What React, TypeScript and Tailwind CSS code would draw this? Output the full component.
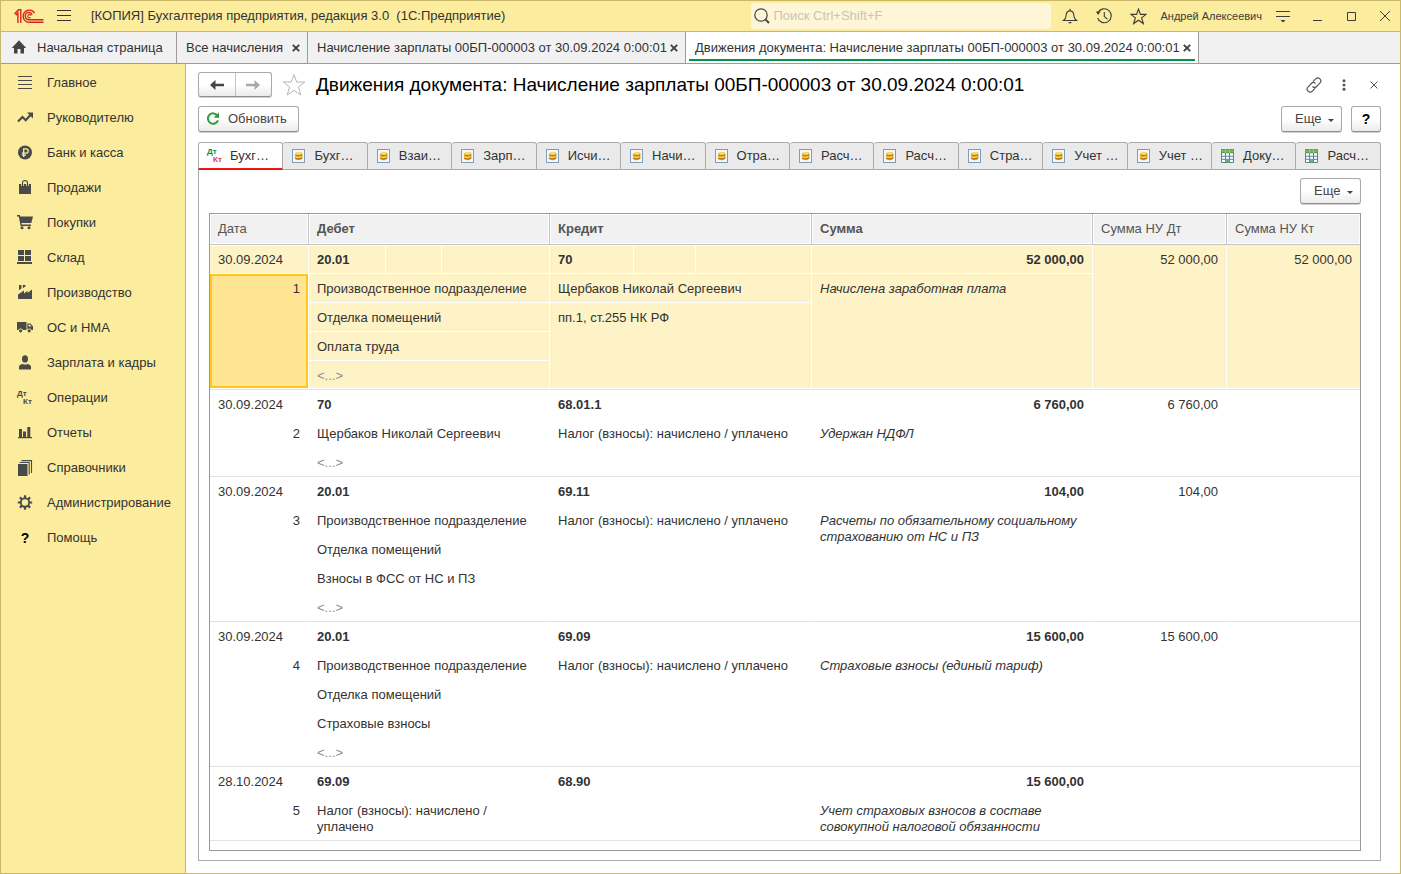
import React from "react";

type IconProps = { className?: string };

const Glyph = ({ children, className = "" }: { children: React.ReactNode; className?: string }) => (
  <svg viewBox="0 0 16 16" className={`size-4 shrink-0 ${className}`} fill="currentColor" aria-hidden="true">
    {children}
  </svg>
);

const Logo = () => (
  <svg viewBox="0 0 30 16" className="h-4 w-[30px] shrink-0" fill="none" stroke="#d8231c" strokeWidth="1.4" aria-hidden="true">
    <path d="M.5 6 4.6 1.8H6.8V15" />
    <path d="M1.8 7.2 3.9 5V15" />
    <path d="M20.6 5.2A6.1 6.1 0 1 0 15.4 14.3H29.5" />
    <path d="M18.2 6.8A3.6 3.6 0 1 0 15.4 11.7H29.5" />
    <path d="M16.9 7.8a1.6 1.6 0 1 0-.4 1.6" strokeWidth="1.1" />
  </svg>
);

const ListIcon = () => (
  <Glyph>
    <path d="M1 1h14v1H1zM1 5h14v1H1zM1 9h14v1H1zM1 13h14v1H1z" />
  </Glyph>
);
const TrendIcon = () => (
  <Glyph>
    <path d="M1 11.5 5.5 7l3.2 3.2L13.5 5" fill="none" stroke="currentColor" strokeWidth="2.2" />
    <path d="M10 2.5h6v6z" />
  </Glyph>
);
const RubleIcon = () => (
  <Glyph>
    <circle cx="8" cy="7.5" r="7" />
    <path d="M6.7 12V3.9h2.4a2.1 2.1 0 0 1 0 4.3H4.8M4.8 10.1H9" fill="none" stroke="#fbec9e" strokeWidth="1.3" />
  </Glyph>
);
const BagIcon = () => (
  <Glyph>
    <path d="M2 4h12v10H2z" />
    <path d="M5.5 6V2.2Q5.5 0.4 8 .4t2.5 1.8V6" fill="none" stroke="#fbec9e" strokeWidth="2.6" />
    <path d="M5.5 6V2.6Q5.5.6 8 .6t2.5 2V6" fill="none" stroke="currentColor" strokeWidth="1.1" />
  </Glyph>
);
const CartIcon = () => (
  <Glyph>
    <path d="M0 0h2.9l.5 1.5H16L14.3 8H4.4l.4 1.5H14V11H3.6L1.8 1.5H0z" />
    <circle cx="5" cy="12.7" r="1.5" />
    <circle cx="12" cy="12.7" r="1.5" />
  </Glyph>
);
const WarehouseIcon = () => (
  <Glyph>
    <path d="M1 0h6v5H1zM8 0h6v5H8zM1 6h6v5H1zM8 6h6v5H8zM0 12h15v2H0z" />
  </Glyph>
);
const FactoryIcon = () => (
  <Glyph>
    <path d="M1 14V9.5l6-4v2.9l3.6-2.6V8L15 4.6V14zM2 0h2.4v3.6L2 5.2zM5.8 0h2.6v1.4L5.8 3.2z" />
  </Glyph>
);
const TruckIcon = () => (
  <Glyph>
    <path d="M0 2h9.5v8H0zM10.3 3.5h3L16 6.3V10h-5.7z" />
    <path d="M11.5 4.6h1.4l1.6 1.9h-3z" fill="#fbec9e" />
    <circle cx="3.6" cy="10.8" r="2.4" fill="#fbec9e" />
    <circle cx="12.2" cy="10.8" r="2.4" fill="#fbec9e" />
    <circle cx="3.6" cy="10.8" r="1.6" />
    <circle cx="12.2" cy="10.8" r="1.6" />
  </Glyph>
);
const PersonIcon = () => (
  <Glyph>
    <ellipse cx="8" cy="3.9" rx="3" ry="3.6" />
    <path d="M2 14.5V12Q2 9.5 5.6 8.9L8 9.7l2.4-.8Q14 9.5 14 12v2.5z" />
  </Glyph>
);
const ReportIcon = () => (
  <Glyph>
    <path d="M1 12h14v1.3H1zM2 4h3v8H2zM6 6.5h3V12H6zM10.3 2h3v10h-3z" />
  </Glyph>
);
const BooksIcon = () => (
  <Glyph>
    <path d="M1 4h9.5v12H1z" />
    <path d="M2.5 2.5h9.7V14.5M4.5.6h10V13" fill="none" stroke="currentColor" strokeWidth="1.1" />
  </Glyph>
);
const GearIcon = () => (
  <Glyph>
    <g fill="none" stroke="currentColor">
      <circle cx="8" cy="7.5" r="4.2" strokeWidth="1.9" />
      <path
        strokeWidth="2.2"
        d="M8 .3v2.6M8 12.1v2.6M.8 7.5h2.6M12.6 7.5h2.6M2.9 2.4l1.9 1.9M11.2 10.7l1.9 1.9M2.9 12.6l1.9-1.9M11.2 4.3l1.9-1.9"
      />
    </g>
  </Glyph>
);
const HelpIcon = () => <span className="w-4 text-center text-sm leading-4 font-bold text-black">?</span>;

const DebitCredit = ({ colored = false }: { colored?: boolean }) => (
  <span
    className="flex h-4 w-4 shrink-0 flex-col justify-center text-left text-[8px] leading-[8px] font-bold"
    aria-hidden="true"
  >
    <span className={colored ? "text-[#00934a]" : ""}>Дт</span>
    <span className={colored ? "pl-1.5 text-[#d9413c]" : "pl-1.5"}>Кт</span>
  </span>
);

const RegisterIcon = () => (
  <Glyph>
    <rect x="1.5" y="1.5" width="12" height="13" fill="#f4f8fc" stroke="#7f9db9" />
    <path d="M3.6 6.2 5.5 4.6q3.2-1 5.8.2l.2 5.6q-1.6 2-4.2 1.9-2.6-.2-3.8-1.8l1-1.3-1-1.4 1.2-.7z" fill="#e5a519" />
    <ellipse cx="7.8" cy="5.4" rx="2.8" ry="1.2" fill="#fbe36f" />
    <path d="M5 7.6q2.8 1.2 6.2-.4M4.4 10.4q3 1.6 6.8-.6" stroke="#9a6410" strokeWidth=".8" fill="none" />
    <path d="M5 9q2.6.9 5.4-.4" stroke="#fff0a0" strokeWidth=".9" fill="none" />
  </Glyph>
);
const SheetIcon = () => (
  <Glyph>
    <rect x="1.5" y="2" width="12" height="12.5" fill="#fff" />
    <path d="M1.5 5v9.5h12V5M1.5 8.3h12M1.5 11.3h12M5.5 5v9.5M9.5 5v9.5" stroke="#5d7f96" fill="none" />
    <path d="M1 1h4v4.3H1zM5.4 1h4v4.3h-4zM9.8 1H14v4.3H9.8z" fill="#55a544" />
    <path d="M5.6 11.2h3.7v3.2H5.6z" fill="#6bb558" />
    <path d="M1.4 3h12" stroke="#8acb78" />
  </Glyph>
);

const StarIcon = ({ className = "" }: IconProps) => (
  <svg viewBox="0 0 24 24" className={`shrink-0 ${className}`} fill="none" stroke="currentColor" aria-hidden="true">
    <path d="M12 1.6 14.7 9h8l-6.3 5 2.4 8L12 17.3 5.2 22l2.4-8L1.3 9h8z" />
  </svg>
);

const CloseMark = ({ label }: { label: string }) => (
  <button type="button" aria-label={label} className="flex shrink-0 items-center">
    <svg viewBox="0 0 8 8" className="size-2" stroke="#3c3c3c" strokeWidth="1.8" aria-hidden="true">
      <path d="m.8.8 6.4 6.4M7.2.8.8 7.2" />
    </svg>
  </button>
);

const sections: [string, React.ReactNode][] = [
  ["Главное", <ListIcon />],
  ["Руководителю", <TrendIcon />],
  ["Банк и касса", <RubleIcon />],
  ["Продажи", <BagIcon />],
  ["Покупки", <CartIcon />],
  ["Склад", <WarehouseIcon />],
  ["Производство", <FactoryIcon />],
  ["ОС и НМА", <TruckIcon />],
  ["Зарплата и кадры", <PersonIcon />],
  ["Операции", <DebitCredit />],
  ["Отчеты", <ReportIcon />],
  ["Справочники", <BooksIcon />],
  ["Администрирование", <GearIcon />],
  ["Помощь", <HelpIcon />],
];

const openWindows = [
  { title: "Все начисления", width: "w-[131px]" },
  { title: "Начисление зарплаты 00БП-000003 от 30.09.2024 0:00:01", width: "w-[378px]" },
];
const documentTitle = "Движения документа: Начисление зарплаты 00БП-000003 от 30.09.2024 0:00:01";

const registers = [
  "Бухг…", "Бухг…", "Взаи…", "Зарп…", "Исчи…", "Начи…", "Отра…",
  "Расч…", "Расч…", "Стра…", "Учет …", "Учет …", "Доку…", "Расч…",
];

type Entry = {
  date: string;
  debit: string;
  credit: string;
  sum: string;
  taxDebit: string;
  taxCredit: string;
  debitDetails: string[];
  creditDetails: string[];
  note: string;
  selected?: boolean;
};

const entries: Entry[] = [
  {
    date: "30.09.2024", debit: "20.01", credit: "70", sum: "52 000,00", taxDebit: "52 000,00", taxCredit: "52 000,00",
    debitDetails: ["Производственное подразделение", "Отделка помещений", "Оплата труда", "<...>"],
    creditDetails: ["Щербаков Николай Сергеевич", "пп.1, ст.255 НК РФ"],
    note: "Начислена заработная плата",
    selected: true,
  },
  {
    date: "30.09.2024", debit: "70", credit: "68.01.1", sum: "6 760,00", taxDebit: "6 760,00", taxCredit: "",
    debitDetails: ["Щербаков Николай Сергеевич", "<...>"],
    creditDetails: ["Налог (взносы): начислено / уплачено"],
    note: "Удержан НДФЛ",
  },
  {
    date: "30.09.2024", debit: "20.01", credit: "69.11", sum: "104,00", taxDebit: "104,00", taxCredit: "",
    debitDetails: ["Производственное подразделение", "Отделка помещений", "Взносы в ФСС от НС и ПЗ", "<...>"],
    creditDetails: ["Налог (взносы): начислено / уплачено"],
    note: "Расчеты по обязательному социальному страхованию от НС и ПЗ",
  },
  {
    date: "30.09.2024", debit: "20.01", credit: "69.09", sum: "15 600,00", taxDebit: "15 600,00", taxCredit: "",
    debitDetails: ["Производственное подразделение", "Отделка помещений", "Страховые взносы", "<...>"],
    creditDetails: ["Налог (взносы): начислено / уплачено"],
    note: "Страховые взносы (единый тариф)",
  },
  {
    date: "28.10.2024", debit: "69.09", credit: "68.90", sum: "15 600,00", taxDebit: "", taxCredit: "",
    debitDetails: ["Налог (взносы): начислено / уплачено"],
    creditDetails: [""],
    note: "Учет страховых взносов в составе совокупной налоговой обязанности",
  },
];

const cellBase = "border-r border-b border-r-white px-2 pt-[7px] pb-[5px] align-top leading-4";

function EntryRows({ entry, index }: { entry: Entry; index: number }) {
  const count = entry.debitDetails.length;
  const fill = entry.selected ? "bg-[#fef2c7]" : "";
  const inner = `${cellBase} border-b-white ${fill}`;
  const last = `${cellBase} border-b-[#e2e2e2] shadow-[inset_0_-1px_#fff] ${fill}`;
  const top = `${inner} shadow-[inset_0_1px_#fff]`;
  const numberCell = entry.selected
    ? `${cellBase} border-b-[#e2e2e2] bg-[#ffe591] text-right shadow-[inset_0_-1px_#fff,inset_0_-3px_#ffc61c,inset_0_0_0_2px_#ffc61c]`
    : `${last} text-right`;
  return (
    <tbody>
      <tr>
        <td className={top}>{entry.date}</td>
        <td className={`${top} font-bold`}>{entry.debit}</td>
        <td className={top} />
        <td className={top} />
        <td className={`${top} font-bold`}>{entry.credit}</td>
        <td className={top} />
        <td className={top} />
        <td className={`${top} text-right font-bold`}>{entry.sum}</td>
        <td rowSpan={count + 1} className={`${last} text-right`}>{entry.taxDebit}</td>
        <td rowSpan={count + 1} className={`${last} border-r-0 text-right`}>{entry.taxCredit}</td>
      </tr>
      {entry.debitDetails.map((detail, i) => {
        const creditCount = entry.creditDetails.length;
        const creditIsLast = i === creditCount - 1;
        return (
          <tr key={i}>
            {i === 0 && <td rowSpan={count} className={numberCell}>{index + 1}</td>}
            <td colSpan={3} className={`${i === count - 1 ? last : inner} ${detail === "<...>" ? "text-[#8c8c8c]" : ""}`}>
              {detail}
            </td>
            {i < creditCount && (
              <td colSpan={3} rowSpan={creditIsLast ? count - i : 1} className={creditIsLast ? last : inner}>
                {entry.creditDetails[i]}
              </td>
            )}
            {i === 0 && (
              <td rowSpan={count} className={`${last} italic`}>
                <div className="max-w-[264px]">{entry.note}</div>
              </td>
            )}
          </tr>
        );
      })}
    </tbody>
  );
}

const buttonLook =
  "flex items-center rounded-[3px] border border-[#a9a9a9] border-b-[#8f8f8f] bg-linear-to-b from-white from-50% to-[#ebebeb] shadow-[0_1px_0_#d0d0d0]";

const MoreButton = () => (
  <button type="button" className={`${buttonLook} h-[26px] w-[61px] gap-[7px] pl-[13px] text-[#444]`}>
    Еще
    <svg viewBox="0 0 6 4" className="mt-1 h-1 w-1.5" fill="#444" aria-hidden="true">
      <path d="M0 0h6L3 3z" />
    </svg>
  </button>
);

function TitleBar() {
  return (
    <header className="flex h-[31px] items-center border-b border-[#c9b86a] bg-[#fbec9e] pl-[13px]">
      <Logo />
      <button type="button" aria-label="Меню" className="ml-[13px]">
        <svg viewBox="0 0 14 12" className="h-3 w-3.5" stroke="#333" aria-hidden="true">
          <path d="M0 .5h14M0 5.5h14M0 10.5h14" />
        </svg>
      </button>
      <span className="ml-5 whitespace-pre">[КОПИЯ] Бухгалтерия предприятия, редакция 3.0  (1С:Предприятие)</span>
      <label className="ml-auto flex h-[26px] w-[300px] items-center gap-[3px] rounded-[3px] bg-[#fef6d6] pl-[3px]">
        <svg viewBox="0 0 16 16" className="size-4 shrink-0" fill="none" stroke="#444" aria-hidden="true">
          <circle cx="7" cy="7" r="6.2" strokeWidth="1.2" />
          <path d="m11.4 11.4 3.6 3.6" strokeWidth="2" />
        </svg>
        <input
          type="search"
          aria-label="Поиск"
          placeholder="Поиск Ctrl+Shift+F"
          className="min-w-0 flex-1 bg-transparent outline-none placeholder:text-[#c9c5b4]"
        />
      </label>
      <div className="flex items-center pl-[11px] text-[#3c3c3c]">
        <button type="button" aria-label="Уведомления">
          <svg viewBox="0 0 16 16" className="size-4" fill="none" stroke="currentColor" strokeWidth="1.1" aria-hidden="true">
            <path d="M1.5 12.5h13Q12.2 10.7 12 8.2 11.8 3.2 8 2.6 4.2 3.2 4 8.2 3.8 10.7 1.5 12.5zM8 .8v1.8" />
            <path d="M6 14h4l-2 1.8z" fill="currentColor" stroke="none" />
          </svg>
        </button>
        <button type="button" aria-label="История" className="ml-[18px]">
          <svg viewBox="0 0 16 16" className="size-4" fill="none" stroke="currentColor" strokeWidth="1.1" aria-hidden="true">
            <path d="M2 4.6a7 7 0 1 1-.4 5.4" />
            <path d="M8.3 4v4.6l3.2 2.6" />
            <path d="M0 3.6h4.6L2 7z" fill="currentColor" stroke="none" />
          </svg>
        </button>
        <button type="button" aria-label="Избранное" className="ml-[18px]">
          <StarIcon className="size-[17px] stroke-[1.6]" />
        </button>
        <span className="ml-[13px] text-[11px]">Андрей Алексеевич</span>
        <button type="button" aria-label="Настройки" className="ml-3.5">
          <svg viewBox="0 0 14 13" className="h-[13px] w-3.5" stroke="currentColor" aria-hidden="true">
            <path d="M0 1.5h14M0 6.5h14" />
            <path d="M4.5 10h5L7 12.6z" fill="currentColor" stroke="none" />
          </svg>
        </button>
        <button type="button" aria-label="Свернуть" className="ml-[23px]">
          <svg viewBox="0 0 9 10" className="h-2.5 w-[9px]" stroke="currentColor" aria-hidden="true">
            <path d="M0 9.5h9" />
          </svg>
        </button>
        <button type="button" aria-label="Развернуть" className="ml-[25px]">
          <svg viewBox="0 0 9 9" className="size-[9px]" fill="none" stroke="currentColor" aria-hidden="true">
            <path d="M.5.5h8v8h-8z" />
          </svg>
        </button>
        <button type="button" aria-label="Закрыть" className="mr-2.5 ml-6">
          <svg viewBox="0 0 10 10" className="size-2.5" stroke="currentColor" aria-hidden="true">
            <path d="m0 0 10 10M10 0 0 10" />
          </svg>
        </button>
      </div>
    </header>
  );
}

function WindowTabs() {
  return (
    <nav className="flex h-8 items-stretch border-b border-[#9b9b9b] bg-[#f1f1f1] whitespace-nowrap" aria-label="Открытые окна">
      <a href="#home" className="flex w-44 items-center gap-2.5 border-r border-[#9b9b9b] pl-2.5">
        <Glyph className="text-[#444]">
          <path d="M8 .2 15.2 8H13v5.4H9.5V8.9h-3v4.5H3V8H.8z" />
        </Glyph>
        Начальная страница
      </a>
      {openWindows.map(({ title, width }) => (
        <div key={title} className={`flex items-center justify-between border-r border-[#9b9b9b] pr-[7px] pl-[9px] ${width}`}>
          <a href="#window">{title}</a>
          <CloseMark label={`Закрыть: ${title}`} />
        </div>
      ))}
      <div className="flex w-[513px] items-stretch border-r border-[#9b9b9b] bg-white px-[3px] pb-0.5">
        <div className="flex flex-1 items-center justify-between border-b-2 border-[#00934a] pt-1 pr-1 pl-1.5">
          <a href="#document" aria-current="page">{documentTitle}</a>
          <CloseMark label="Закрыть документ" />
        </div>
      </div>
    </nav>
  );
}

function Sidebar() {
  return (
    <nav className="w-[185px] shrink-0 border-r border-[#c9b86a] bg-[#fbec9e] pt-px" aria-label="Разделы">
      {sections.map(([name, icon]) => (
        <a key={name} href="#section" className="flex h-[35px] items-center gap-3.5 pl-4">
          <span className="flex text-[#4a4a4a]">{icon}</span>
          {name}
        </a>
      ))}
    </nav>
  );
}

function Arrow({ className }: IconProps) {
  return (
    <svg viewBox="0 0 14 10" className={`h-2.5 w-3.5 ${className}`} fill="currentColor" aria-hidden="true">
      <path d="M0 5 5.5 0v3.8H14v2.4H5.5V10z" />
    </svg>
  );
}

export default function App() {
  return (
    <div className="flex min-h-screen flex-col border border-[#c9b86a] bg-white font-['Liberation_Sans',Arial,sans-serif] text-[13px] leading-4 text-[#333]">
      <TitleBar />
      <WindowTabs />
      <div className="flex flex-1 items-stretch">
        <Sidebar />
        <main className="flex min-w-0 flex-1 flex-col pt-2 pr-[19px] pb-3 pl-3">
          <div className="flex items-center">
            <div className={`${buttonLook} h-[25px] w-[74px]`}>
              <button type="button" aria-label="Назад" className="flex h-full flex-1 items-center justify-center border-r border-[#c4c4c4] text-[#444]">
                <Arrow className="" />
              </button>
              <button type="button" aria-label="Вперед" className="flex h-full flex-1 items-center justify-center text-[#a9a9a9]">
                <Arrow className="rotate-180" />
              </button>
            </div>
            <button type="button" aria-label="В избранное" className="ml-2.5 text-[#b0b6bc]">
              <StarIcon className="size-6" />
            </button>
            <h1 className="ml-2.5 text-[19px] leading-6 text-black">{documentTitle}</h1>
            <div className="ml-auto flex items-center text-[#555]">
              <button type="button" aria-label="Ссылка">
                <svg viewBox="0 0 16 16" className="size-4" fill="none" stroke="currentColor" strokeWidth="1.2" aria-hidden="true">
                  <path d="m7 4.6 2.6-2.7a2.9 2.9 0 0 1 4.3 4.3l-3.3 3.3a2.9 2.9 0 0 1-4.1 0" />
                  <path d="m9 11.4-2.6 2.7a2.9 2.9 0 0 1-4.3-4.3l3.3-3.3a2.9 2.9 0 0 1 4.1 0" />
                </svg>
              </button>
              <button type="button" aria-label="Действия" className="ml-5">
                <svg viewBox="0 0 4 12" className="h-3 w-1" fill="currentColor" aria-hidden="true">
                  <circle cx="2" cy="1.8" r="1.5" />
                  <circle cx="2" cy="6" r="1.5" />
                  <circle cx="2" cy="10.2" r="1.5" />
                </svg>
              </button>
              <button type="button" aria-label="Закрыть форму" className="mr-[3px] ml-6">
                <svg viewBox="0 0 8 8" className="size-2" stroke="currentColor" aria-hidden="true">
                  <path d="m.5.5 7 7M7.5.5l-7 7" />
                </svg>
              </button>
            </div>
          </div>

          <div className="mt-[9px] flex items-center">
            <button type="button" className={`${buttonLook} h-[26px] gap-[7px] pr-[11px] pl-1.5 text-[#444]`}>
              <Glyph className="text-[#2f9e38]">
                <path d="M12.4 4.6A5.2 5.2 0 1 0 13 9.4" fill="none" stroke="currentColor" strokeWidth="2" />
                <path d="M8.6 6.6 14 7V1.6z" />
              </Glyph>
              Обновить
            </button>
            <div className="ml-auto flex gap-[9px]">
              <MoreButton />
              <button type="button" aria-label="Справка" className={`${buttonLook} h-[26px] w-[30px] justify-center text-sm font-bold text-black`}>
                ?
              </button>
            </div>
          </div>

          <div className="mt-2.5 flex h-7" role="tablist">
            {registers.map((name, i) => (
              <button
                key={i}
                type="button"
                role="tab"
                aria-selected={i === 0}
                className={
                  i === 0
                    ? "flex min-w-0 flex-1 items-center gap-[7px] rounded-t-[3px] border border-b-2 border-[#ababab] border-b-[#f01414] bg-white pl-2 whitespace-nowrap"
                    : "flex min-w-0 flex-1 items-center gap-[7px] rounded-t-[3px] border border-l-0 border-[#ababab] bg-[#eaeaea] pl-2 whitespace-nowrap"
                }
              >
                {i === 0 ? <DebitCredit colored /> : i > 11 ? <SheetIcon /> : <RegisterIcon />}
                {name}
              </button>
            ))}
          </div>

          <section className="flex flex-1 flex-col border border-t-0 border-[#ababab] px-2.5 pt-2 pb-[9px]">
            <div className="flex justify-end pr-[9px]">
              <MoreButton />
            </div>
            <div className="mt-[9px] mr-[9px] flex-1 border border-[#9b9b9b]">
              <table className="w-full table-fixed border-separate border-spacing-0">
                <colgroup>
                  <col className="w-[99px]" />
                  <col className="w-[77px]" />
                  <col className="w-[56px]" />
                  <col className="w-[108px]" />
                  <col className="w-[84px]" />
                  <col className="w-[62px]" />
                  <col className="w-[116px]" />
                  <col />
                  <col className="w-[134px]" />
                  <col className="w-[133px]" />
                </colgroup>
                <thead>
                  <tr className="h-[31px] text-left text-[#555] *:border-b *:border-[#c4c4c4] *:bg-[#f1f1f1] *:px-2 *:shadow-[inset_0_0_0_1px_#fff]">
                    <th className="border-r font-normal">Дата</th>
                    <th colSpan={3} className="border-r">Дебет</th>
                    <th colSpan={3} className="border-r">Кредит</th>
                    <th className="border-r">Сумма</th>
                    <th className="border-r font-normal">Сумма НУ Дт</th>
                    <th className="font-normal">Сумма НУ Кт</th>
                  </tr>
                </thead>
                {entries.map((entry, i) => (
                  <EntryRows key={i} entry={entry} index={i} />
                ))}
              </table>
            </div>
          </section>
        </main>
      </div>
    </div>
  );
}
